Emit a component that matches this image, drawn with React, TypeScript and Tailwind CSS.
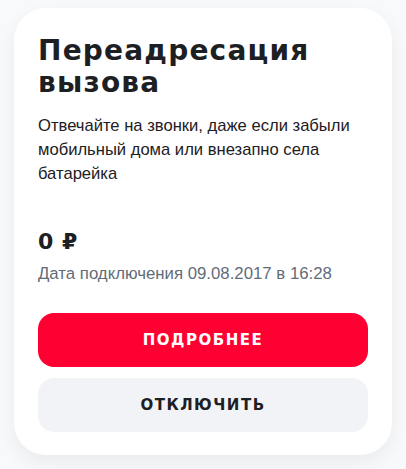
export default function App() {
  return (
    <div className="min-h-[469px] w-[406px] bg-[#f8f9fb] pt-2 pl-[14px]">
      <div className="flex w-[378px] flex-col rounded-[32px] bg-white px-6 pt-[27px] pb-[23px] shadow-[0_8px_20px_rgba(0,0,0,0.06)]">
        {/* Title */}
        <h1 className="font-['DejaVu_Sans',sans-serif] text-[28px] leading-[32px] font-bold tracking-[1.2px] text-[#1d2023]">
          Переадресация вызова
        </h1>

        {/* Description */}
        <p className="mt-[15px] font-['Liberation_Sans',Arial,sans-serif] text-[16.6px] leading-[24px] text-[#1d2023]">
          Отвечайте на звонки, даже если забыли мобильный дома или внезапно села батарейка
        </p>

        {/* Price */}
        <div className="mt-[44px] font-['DejaVu_Sans',sans-serif] text-[22px] leading-[24px] font-bold tracking-[0.5px] text-[#1d2023]">
          0 ₽
        </div>
        <div className="mt-2 font-['Liberation_Sans',Arial,sans-serif] text-[16.8px] leading-[24px] text-[#626c77]">
          Дата подключения 09.08.2017 в 16:28
        </div>

        {/* Actions */}
        <div className="mt-[27px] flex flex-col gap-[11px]">
          <button className="flex h-[54px] items-center justify-center rounded-2xl bg-[#ff0032] font-['DejaVu_Sans',sans-serif] text-[15px] font-bold tracking-[1.5px] text-white uppercase">
            Подробнее
          </button>
          <button className="flex h-[54px] items-center justify-center rounded-2xl bg-[#f2f3f7] font-['DejaVu_Sans',sans-serif] text-[15px] font-bold tracking-[1.5px] text-[#1d2023] uppercase">
            Отключить
          </button>
        </div>
      </div>
    </div>
  )
}
